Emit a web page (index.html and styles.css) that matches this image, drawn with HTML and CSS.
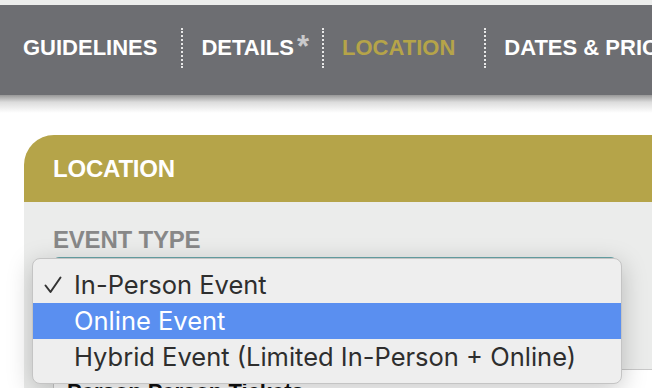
FILE: index.html
```html
<!DOCTYPE html>
<html lang="en">

<head>
    <meta charset="UTF-8">
    <meta name="viewport" content="width=device-width, initial-scale=1.0">
    <title>Event Submission - Location</title>
    <link rel="stylesheet" href="styles.css">
</head>

<body>
    <div class="franja"></div>
    <nav class="pasos">
        <a class="paso primero">GUIDELINES</a>
        <a class="paso">DETAILS<span class="asterisco">*</span></a>
        <a class="paso activo">LOCATION</a>
        <a class="paso">DATES &amp; PRICES</a>
    </nav>
    <div class="sombra"></div>

    <div class="tarjeta">
        <div class="encabezado">LOCATION</div>
        <div class="cuerpo">
            <div class="etiqueta">EVENT TYPE</div>
            <div class="selector"></div>
            <div class="boletos">Person Person Tickets</div>

            <!-- menu desplegado del select -->
            <ul class="menu">
                <li class="opcion elegida">
                    <svg class="palomita" width="18" height="18" viewBox="0 0 18 18">
                        <path d="M1.5 9.5 L6.5 16 L16.5 1.5" fill="none" stroke="#333" stroke-width="2" stroke-linecap="round" stroke-linejoin="round"/>
                    </svg>In-Person Event</li>
                <li class="opcion marcada">Online Event</li>
                <li class="opcion">Hybrid Event (Limited In-Person + Online)</li>
            </ul>
        </div>
    </div>
</body>

</html>
```

FILE: styles.css
```css
body {
    margin: 0;
    background-color: #fff;
    font-family: "Liberation Sans", Arial, sans-serif;
    overflow: hidden;
}

.franja {
    height: 5px;
    background-color: #ecedec;
}

.pasos {
    display: flex;
    align-items: center;
    height: 86px;
    padding-bottom: 4px;
    background-color: #6d6e72;
    white-space: nowrap;
}

.paso {
    display: block;
    padding: 0 24px 0 18px;
    font-size: 22px;
    font-weight: bold;
    line-height: 40px;
    color: #fff;
    border-left: 2px dotted #e8e8e8;
}

.primero {
    padding-left: 23px;
    border-left: none;
}

.activo {
    color: #b5a449;
    padding-right: 29px;
}

.asterisco {
    display: inline-block;
    position: relative;
    top: 9px;
    font-size: 31px;
    line-height: 20px;
    vertical-align: top;
    margin-left: 3px;
    margin-right: -11px;
    color: #c9c9cb;
}

.sombra {
    height: 18px;
    background: linear-gradient(#979797, #dcdcdc 40%, #fff);
}

.tarjeta {
    width: 700px;
    margin: 22px 0 0 24px;
}

.encabezado {
    height: 67px;
    line-height: 67px;
    padding-left: 29px;
    border-top-left-radius: 30px;
    background-color: #b5a449;
    color: #fff;
    font-size: 24px;
    font-weight: bold;
    letter-spacing: -0.2px;
}

.cuerpo {
    position: relative;
    padding: 24px 0 40px 29px;
    background-color: #ebeceb;
}

.etiqueta {
    font-size: 24px;
    font-weight: bold;
    line-height: 28px;
    letter-spacing: -0.2px;
    color: #888;
}

.selector {
    width: 562px;
    height: 100px;
    margin-top: 3px;
    border: 1px solid #68a6a9;
    border-radius: 6px;
    background-color: #fff;
}

.boletos {
    margin-top: 10px;
    padding: 9px 13px;
    border-top: 1px solid #c9c9c9;
    border-left: 1px solid #c9c9c9;
    background-color: #fff;
    font-size: 22px;
    font-weight: bold;
    color: #111;
}

.menu {
    position: absolute;
    left: 8px;
    top: 56px;
    width: 588px;
    margin: 0;
    padding: 8px 0;
    list-style: none;
    background-color: #eeeeee;
    border: 1px solid #c4c4c4;
    border-radius: 8px;
    box-shadow: 0 6px 26px rgba(0, 0, 0, 0.22);
    font-family: Inter, "Noto Sans", sans-serif;
    font-size: 25.5px;
    color: #2e2e2e;
}

.opcion {
    position: relative;
    height: 36px;
    line-height: 36px;
    padding-left: 41px;
}

.palomita {
    position: absolute;
    left: 11px;
    top: 9px;
}

.marcada {
    background-color: #5a8ff0;
    color: #fff;
}
```
